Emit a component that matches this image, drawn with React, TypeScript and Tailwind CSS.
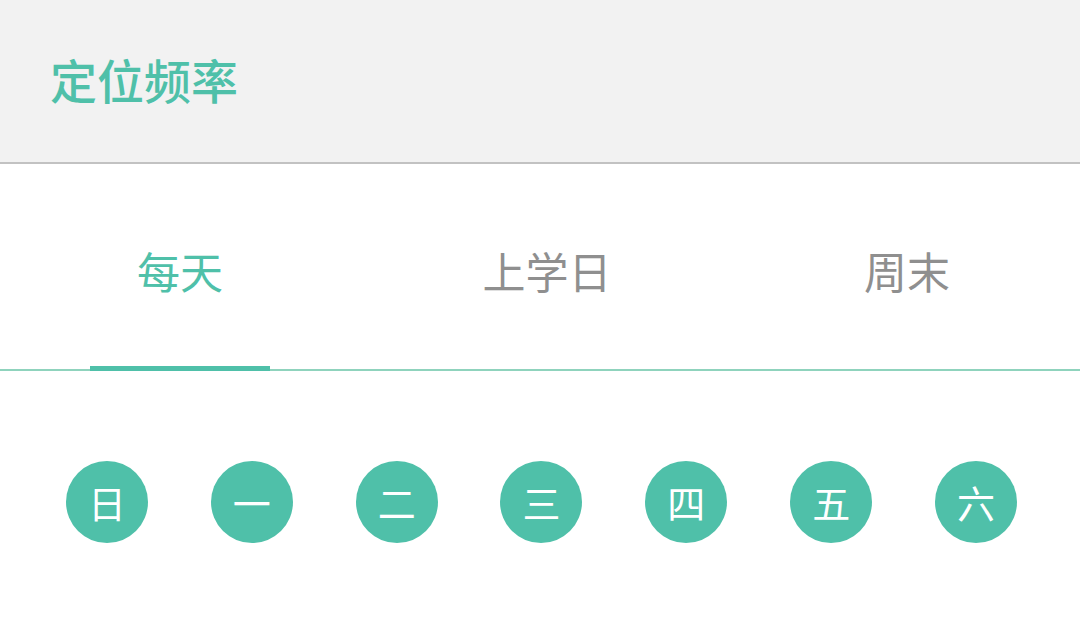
import React from "react";

const days = ["日", "一", "二", "三", "四", "五", "六"];

const App = () => {
  const [tab, setTab] = React.useState(0);
  const tabs = [
    { label: "每天", w: "w-[360px]" },
    { label: "上学日", w: "w-[374px]" },
    { label: "周末", w: "w-[346px]" },
  ];

  return (
    <div
      className="w-[1080px] h-[633px] bg-white overflow-hidden"
      style={{ fontFamily: '"Noto Sans CJK SC", "Noto Sans", sans-serif' }}
    >
      <div className="h-[164px] bg-[#f2f2f2] flex items-center pl-[50px] border-b-2 border-[#c2c2c2]">
        <span className="text-[47px] font-medium leading-none text-[#4fc0a9] -mt-[6px]">定位频率</span>
      </div>
      <div className="relative h-[207px] flex border-b-2 border-[#8fd3bd]">
        {tabs.map((t, i) => (
          <div
            key={t.label}
            onClick={() => setTab(i)}
            className={`${t.w} flex items-center justify-center cursor-pointer relative`}
          >
            <span
              className={`text-[43px] leading-none pt-[8px] ${
                tab === i ? "text-[#4fc0a9]" : "text-[#8f8f8f]"
              }`}
            >
              {t.label}
            </span>
            {tab === i && (
              <div className="absolute bottom-[-2px] left-[90px] w-[180px] h-[5px] bg-[#4fc0a9]" />
            )}
          </div>
        ))}
      </div>
      <div className="flex justify-between pl-[66px] pr-[63px] pt-[90px]">
        {days.map((d) => (
          <div
            key={d}
            className="w-[82px] h-[82px] rounded-full bg-[#4fc0a9] flex items-center justify-center"
          >
            <span className="text-[38px] leading-none text-white">{d}</span>
          </div>
        ))}
      </div>
    </div>
  );
};

export default App;
